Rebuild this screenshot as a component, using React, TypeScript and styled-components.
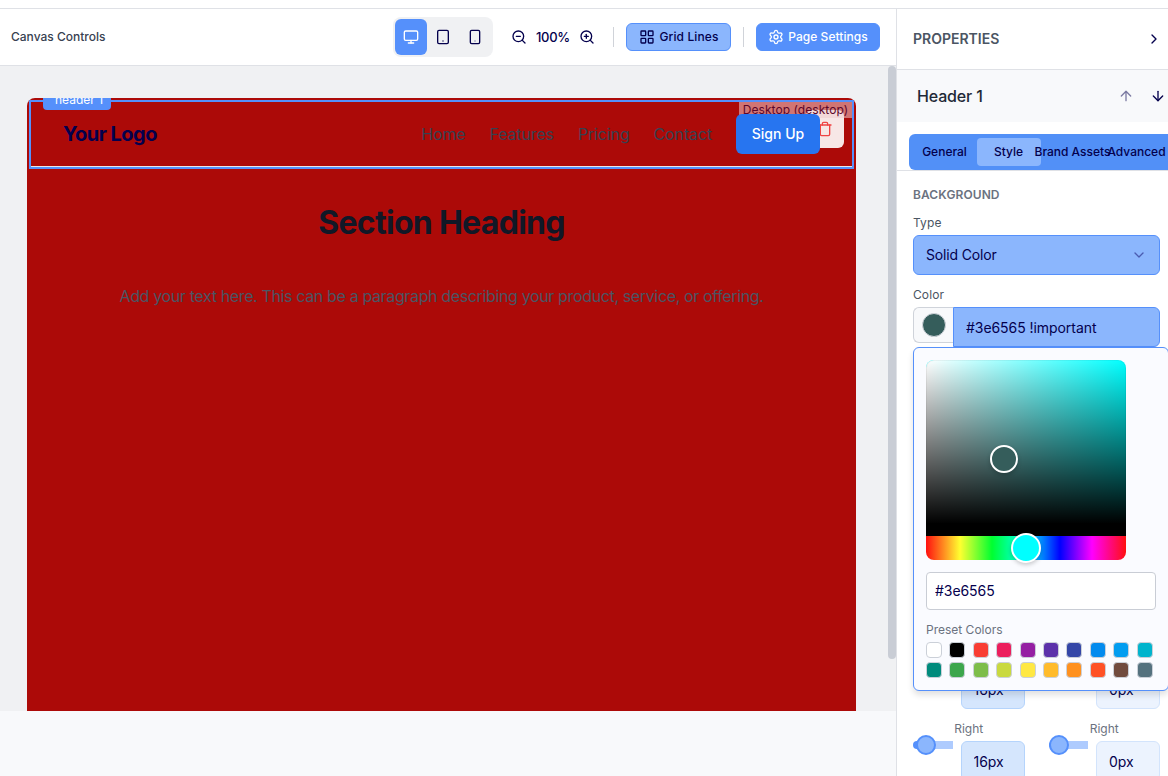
import React from "react";
import styled, { createGlobalStyle, css } from "styled-components";
import {
  Monitor, Tablet, Smartphone, ZoomOut, ZoomIn, LayoutGrid, Settings, ChevronRight, ChevronDown, ArrowUp, ArrowDown, Trash,
} from "lucide-react";

const c = {
  ink: "#04004d",
  blue: "#5590fb",
  soft: "#8bb6fd",
  line: "#dfe1e6",
  red: "#ac0a08",
};

const Global = createGlobalStyle`
  *{box-sizing:border-box}
  body{margin:0;background:#f8f9fb;font-family:Inter,"Liberation Sans",sans-serif;color:${c.ink};overflow:hidden}
  button,input{font-family:inherit;color:inherit;margin:0}
  button{padding:0}
`;

const Page = styled.div`
  height: 776px;
  display: flex;
  flex-direction: column;
  overflow: hidden;
`;
const TopStrip = styled.div`
  flex: none;
  height: 9px;
  background: #fff;
  border-bottom: 1px solid ${c.line};
`;
const Body = styled.div`
  flex: 1;
  min-height: 0;
  display: flex;
`;
const Workspace = styled.main`
  width: 896px;
  flex: none;
  display: flex;
  flex-direction: column;
`;
const Toolbar = styled.div`
  height: 57px;
  flex: none;
  display: flex;
  align-items: center;
  padding: 0 16px 1px 11px;
  background: #fff;
  border-bottom: 1px solid ${c.line};
`;
const ToolbarTitle = styled.span`
  font-size: 12px;
  font-weight: 500;
  color: #374151;
  margin-right: auto;
`;
const DeviceGroup = styled.div`
  display: flex;
  height: 40px;
  padding: 2px;
  border-radius: 8px;
  background: #f0f1f3;
`;
const DeviceButton = styled.button<{ $active?: boolean }>`
  width: 32px;
  height: 36px;
  border: 0;
  border-radius: 6px;
  display: grid;
  place-items: center;
  background: ${(p) => (p.$active ? c.blue : "transparent")};
  color: ${(p) => (p.$active ? "#fff" : c.ink)};
  svg path { opacity: ${(p) => (p.$active ? 1 : 0.5)}; }
`;
const ZoomGroup = styled.div`
  display: flex;
  align-items: center;
  gap: 9px;
  margin: 0 18px 0 18px;
  font-size: 13px;
  font-weight: 500;
  letter-spacing: -0.25px;
  svg { display: block; }
`;
const Divider = styled.span`
  width: 1px;
  height: 20px;
  background: #d0d3d9;
`;
const ToolButton = styled.button<{ $solid?: boolean }>`
  height: 28px;
  width: ${(p) => (p.$solid ? 124 : 105)}px;
  margin-left: 12px;
  margin-right: ${(p) => (p.$solid ? 0 : 12)}px;
  display: flex;
  align-items: center;
  justify-content: center;
  gap: ${(p) => (p.$solid ? 4 : 5)}px;
  border: 1px solid ${c.blue};
  border-radius: 6px;
  font-size: 12px;
  font-weight: 500;
  letter-spacing: ${(p) => (p.$solid ? 0.05 : 0.1)}px;
  background: ${(p) => (p.$solid ? c.blue : c.soft)};
  color: ${(p) => (p.$solid ? "#fff" : c.ink)};
`;
const Viewport = styled.div`
  height: 645px;
  display: flex;
  justify-content: space-between;
  padding-left: 27px;
  background: #f0f1f3;
`;
const Sheet = styled.div`
  width: 829px;
  margin-top: 32px;
  padding: 2px;
  border-radius: 8px 8px 0 0;
  overflow: hidden;
  background: ${c.red};
`;
const ScrollThumb = styled.div`
  width: 8px;
  height: 593px;
  border-radius: 4px;
  background: #c9cdd5;
`;
const SiteHeader = styled.header`
  position: relative;
  height: 69px;
  display: flex;
  align-items: center;
  padding: 0 32px 2px;
  border: 2px solid ${c.blue};
  box-shadow: inset 0 -1px #e5e7eb;
`;
const BlockLabel = styled.span`
  position: absolute;
  left: 12px;
  top: -14px;
  width: 68px;
  height: 22px;
  padding-left: 4px;
  line-height: 24px;
  text-align: center;
  border-radius: 4px;
  background: ${c.blue};
  color: #fff;
  font-size: 12px;
`;
const Logo = styled.div`
  font-size: 20px;
  font-weight: 700;
  letter-spacing: -0.5px;
  margin-right: auto;
`;
const Nav = styled.nav`
  display: flex;
  gap: 24px;
  margin-right: 24px;
  color: #374151;
  font-size: 16px;
  letter-spacing: -0.14px;
`;
const SignUp = styled.button`
  position: relative;
  z-index: 3;
  width: 84px;
  height: 40px;
  border: 0;
  border-radius: 6px;
  background: #2775f0;
  color: #fff;
  font-size: 14px;
  font-weight: 500;
`;
const DeleteBox = styled.div`
  position: absolute;
  right: 8px;
  top: 8px;
  width: 38px;
  height: 38px;
  display: flex;
  align-items: center;
  padding-left: 11px;
  border-radius: 6px;
  background: rgba(255, 255, 255, 0.9);
  color: #ef4444;
`;
const ViewportTag = styled.span`
  position: absolute;
  z-index: 2;
  right: 0;
  top: 0;
  width: 113px;
  height: 16px;
  line-height: 16px;
  text-align: center;
  background: rgba(240, 205, 205, 0.55);
  color: #5d0729;
  font-size: 12px;
  letter-spacing: 0.06px;
`;
const Section = styled.section`
  text-align: center;
  h2 { margin: 34px 0 0; font-size: 32px; line-height: 40px; font-weight: 700; letter-spacing: -0.7px; color: #111827; }
  p { margin: 41px 0 0; font-size: 16px; line-height: 24px; letter-spacing: -0.36px; color: #4b5563; }
`;

const Panel = styled.aside`
  flex: 1;
  min-width: 0;
  overflow: hidden;
  border-left: 1px solid ${c.line};
  background: #fff;
`;
const PanelHeader = styled.div`
  height: 61px;
  display: flex;
  align-items: center;
  justify-content: space-between;
  padding: 0 6px 1px 16px;
  border-bottom: 1px solid ${c.line};
  color: #4b5563;
  font-size: 14px;
  font-weight: 600;
  svg { color: ${c.ink}; }
`;
const ElementBar = styled.div`
  height: 52px;
  display: flex;
  align-items: center;
  gap: 16px;
  padding-left: 20px;
  background: #f8f9fb;
  color: #1f2937;
  font-size: 16px;
  font-weight: 500;
  letter-spacing: -0.15px;
  span { width: 185px; }
  svg { color: ${c.ink}; flex: none; }
`;
const TabsRow = styled.div`
  height: 49px;
  padding: 12px 0 0 12px;
  border-bottom: 1px solid ${c.line};
`;
const Tabs = styled.div`
  width: 264px;
  height: 36px;
  padding: 4px;
  display: grid;
  grid-template-columns: repeat(4, 64px);
  border-radius: 6px;
  background: #5290f7;
`;
const Tab = styled.button<{ $active?: boolean }>`
  border: 0;
  border-radius: 4px;
  padding: 0 1px 2px 0;
  display: flex;
  align-items: center;
  justify-content: center;
  white-space: nowrap;
  background: ${(p) => (p.$active ? c.soft : "transparent")};
  font-size: 12px;
  font-weight: 500;
`;
const PanelBody = styled.div`
  padding: 16px 8px 0 16px;
`;
const GroupTitle = styled.h3`
  margin: 0;
  font-size: 12px;
  line-height: 16px;
  font-weight: 600;
  letter-spacing: 0.1px;
  color: #6b7280;
`;
const FieldLabel = styled.label<{ $muted?: boolean }>`
  display: block;
  font-size: 12px;
  line-height: 16px;
  letter-spacing: ${(p) => (p.$muted ? 0 : 0.1)}px;
  color: ${(p) => (p.$muted ? "#6b7280" : "#4b5563")};
`;
const Field = styled.div`
  position: relative;
  margin-top: 12px;
`;
const SelectBox = styled.div`
  height: 40px;
  margin-top: 4px;
  display: flex;
  align-items: center;
  justify-content: space-between;
  padding: 0 12px 1px;
  border: 1px solid ${c.blue};
  border-radius: 6px;
  background: ${c.soft};
  font-size: 14px;
  letter-spacing: -0.15px;
  svg { color: #4a5bb0; }
`;
const ColorRow = styled.div`
  display: flex;
  align-items: flex-start;
  margin-top: 4px;
`;
const SwatchBox = styled.div`
  width: 40px;
  height: 36px;
  display: grid;
  place-items: center;
  border: 1px solid #cfd3da;
  border-right: 0;
  border-radius: 6px 0 0 6px;
  background: #f8f9fb;
  i { width: 24px; height: 24px; border-radius: 50%; background: #355d5b; border: 1px solid #d1d5db; }
`;
const inputText = css`
  font-size: 14px;
  letter-spacing: -0.06px;
`;
const ColorInput = styled.input`
  ${inputText}
  width: 207px;
  height: 40px;
  padding: 0 12px;
  border: 1px solid ${c.blue};
  border-radius: 0 6px 6px 0;
  background: ${c.soft};
`;
const Popover = styled.div`
  position: absolute;
  z-index: 3;
  top: 60px;
  left: 0;
  width: 256px;
  height: 344px;
  padding: 12px;
  border: 1px solid ${c.blue};
  border-radius: 6px;
  background: #fafbff;
  box-shadow: 0 4px 6px rgba(0, 0, 0, 0.12);
`;
const Picker = styled.div`
  width: 200px;
`;
const Saturation = styled.div`
  position: relative;
  height: 176px;
  border-bottom: 12px solid #000;
  border-radius: 8px 8px 0 0;
  background: linear-gradient(to top, #000, transparent), linear-gradient(to right, #fff, transparent) #00ffff;
  box-shadow: inset 0 0 0 1px rgba(0, 0, 0, 0.05);
`;
const Hue = styled.div`
  position: relative;
  height: 24px;
  border-radius: 0 0 8px 8px;
  background: linear-gradient(to right, #ff1010 0%, #ffff30 17%, #00ff30 33%, #0ff 50%, #00f 67%, #f0f 83%, #ff1010 100%);
`;
const Handle = styled.span<{ $x: number; $y: number; $size: number; $fill: string }>`
  position: absolute;
  left: ${(p) => p.$x}px;
  top: ${(p) => p.$y}px;
  width: ${(p) => p.$size}px;
  height: ${(p) => p.$size}px;
  transform: translate(-50%, -50%);
  border: 2px solid #fff;
  border-radius: 50%;
  background: ${(p) => p.$fill};
  box-shadow: 0 2px 4px rgba(0, 0, 0, 0.2);
`;
const HexInput = styled.input`
  ${inputText}
  display: block;
  width: 230px;
  height: 38px;
  margin: 12px 0;
  padding: 0 8px 2px;
  border: 1px solid #c9cdd5;
  border-radius: 4px;
  background: #fff;
`;
const Presets = styled.div`
  display: grid;
  grid-template-columns: repeat(10, 1fr);
  gap: 4px;
  margin-top: 4px;
`;
const Preset = styled.button<{ $fill: string }>`
  width: 16px;
  height: 16px;
  border: 1px solid #cbd0d8;
  border-radius: 4px;
  background: ${(p) => p.$fill};
`;
const Sides = styled.div`
  display: grid;
  grid-template-columns: 1fr 1fr;
  gap: 12px 24px;
  margin-top: 302px;
`;
const Side = styled.div`
  text-align: center;
  label { height: 16px; }
`;
const SideControls = styled.div`
  display: flex;
  align-items: flex-start;
  gap: 8px;
  margin-top: 4px;
`;
const Track = styled.div<{ $value: number }>`
  position: relative;
  flex: 1;
  height: 8px;
  border-radius: 4px 0 0 4px;
  background: linear-gradient(to right, ${c.blue} ${(p) => p.$value}px, #aecbfe ${(p) => p.$value}px);
`;
const Thumb = styled.span<{ $x: number }>`
  position: absolute;
  left: ${(p) => p.$x}px;
  top: -6px;
  width: 20px;
  height: 20px;
  border: 2px solid ${c.blue};
  border-radius: 50%;
  background: ${c.soft};
`;
const SideInput = styled.input<{ $set?: boolean }>`
  ${inputText}
  width: 64px;
  height: 40px;
  padding: 0 12px;
  border: 1px solid ${(p) => (p.$set ? "#b5d4fc" : "#d3e4fc")};
  border-radius: 6px;
  background: ${(p) => (p.$set ? "#d5e6fd" : "#ecf3fe")};
`;

const presets = [
  "#ffffff", "#000000", "#f93d33", "#ec1e5d", "#951fa3", "#5c31aa", "#3446a7", "#038bee", "#029df0", "#01b4cd",
  "#008b7d", "#3ca64c", "#7dbd4a", "#c9d93f", "#ffe843", "#ffbb2b", "#ff911f", "#ff5125", "#714b3e", "#54717e",
];

function SideField({ label, value, set }: { label?: string; value: string; set?: boolean }) {
  return (
    <Side>
      <FieldLabel $muted>{label}</FieldLabel>
      <SideControls>
        <Track $value={set ? 12 : 4}><Thumb $x={set ? 3 : 0} /></Track>
        <SideInput $set={set} defaultValue={value} />
      </SideControls>
    </Side>
  );
}

export default function App() {
  return (
    <Page>
      <Global />
      <TopStrip />
      <Body>
        <Workspace>
          <Toolbar>
            <ToolbarTitle>Canvas Controls</ToolbarTitle>
            <DeviceGroup>
              <DeviceButton $active><Monitor size={16} /></DeviceButton>
              <DeviceButton><Tablet size={16} /></DeviceButton>
              <DeviceButton><Smartphone size={16} /></DeviceButton>
            </DeviceGroup>
            <ZoomGroup><ZoomOut size={16} /><span>100%</span><ZoomIn size={16} /></ZoomGroup>
            <Divider />
            <ToolButton><LayoutGrid size={16} />Grid Lines</ToolButton>
            <Divider />
            <ToolButton $solid><Settings size={16} />Page Settings</ToolButton>
          </Toolbar>
          <Viewport>
            <Sheet>
              <SiteHeader>
                <BlockLabel>header 1</BlockLabel>
                <Logo>Your Logo</Logo>
                <Nav><span>Home</span><span>Features</span><span>Pricing</span><span>Contact</span></Nav>
                <SignUp>Sign Up</SignUp>
                <DeleteBox><Trash size={16} /></DeleteBox>
                <ViewportTag>Desktop (desktop)</ViewportTag>
              </SiteHeader>
              <Section>
                <h2>Section Heading</h2>
                <p>Add your text here. This can be a paragraph describing your product, service, or offering.</p>
              </Section>
            </Sheet>
            <ScrollThumb />
          </Viewport>
        </Workspace>
        <Panel>
          <PanelHeader>PROPERTIES<ChevronRight size={16} /></PanelHeader>
          <ElementBar><span>Header 1</span><ArrowUp size={16} opacity={0.5} /><ArrowDown size={16} /></ElementBar>
          <TabsRow>
            <Tabs><Tab>General</Tab><Tab $active>Style</Tab><Tab>Brand Assets</Tab><Tab>Advanced</Tab></Tabs>
          </TabsRow>
          <PanelBody>
            <GroupTitle>BACKGROUND</GroupTitle>
            <Field>
              <FieldLabel>Type</FieldLabel>
              <SelectBox>Solid Color<ChevronDown size={16} /></SelectBox>
            </Field>
            <Field>
              <FieldLabel>Color</FieldLabel>
              <ColorRow>
                <SwatchBox><i /></SwatchBox>
                <ColorInput defaultValue="#3e6565 !important" />
              </ColorRow>
              <Popover>
                <Picker>
                  <Saturation><Handle $x={78} $y={99} $size={28} $fill="#355d5b" /></Saturation>
                  <Hue><Handle $x={100} $y={12} $size={30} $fill="#00ffff" /></Hue>
                </Picker>
                <HexInput defaultValue="#3e6565" />
                <FieldLabel $muted>Preset Colors</FieldLabel>
                <Presets>{presets.map((p) => <Preset key={p} $fill={p} />)}</Presets>
              </Popover>
            </Field>
            <Sides>
              <SideField value="16px" set />
              <SideField value="0px" />
              <SideField label="Right" value="16px" set />
              <SideField label="Right" value="0px" />
            </Sides>
          </PanelBody>
        </Panel>
      </Body>
    </Page>
  );
}
